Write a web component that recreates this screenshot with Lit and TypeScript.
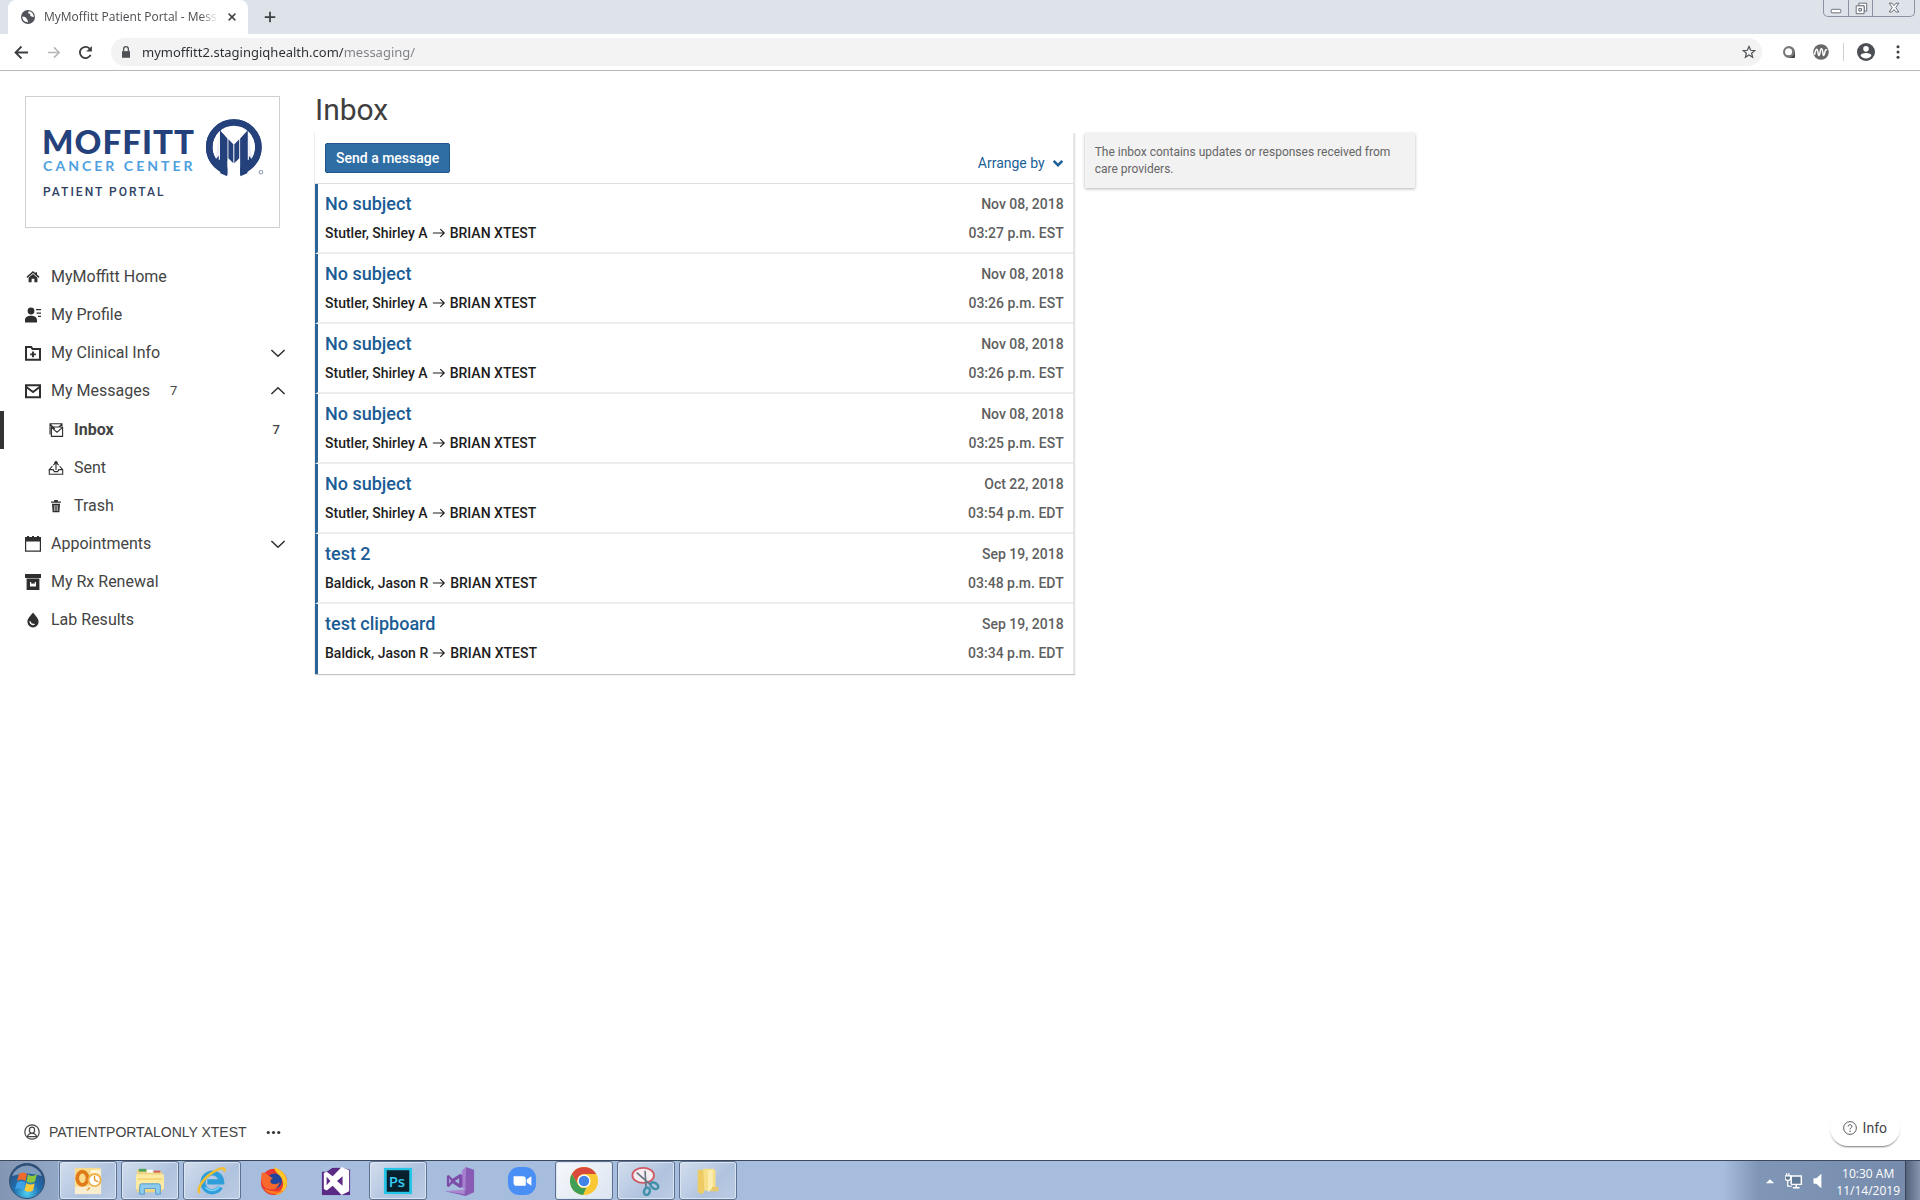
import { LitElement, html, svg, css, nothing } from "lit";
import { customElement, property, state } from "lit/decorators.js";
import { classMap } from "lit/directives/class-map.js";

interface Message {
  subject: string;
  from: string;
  date: string;
  time: string;
}

interface NavItem {
  id: string;
  label: string;
  icon: string;
  count?: number;
  children?: NavItem[];
}

const OWNER = "BRIAN XTEST";

const MESSAGES: Message[] = [
  { subject: "No subject", from: "Stutler, Shirley A", date: "Nov 08, 2018", time: "03:27 p.m. EST" },
  { subject: "No subject", from: "Stutler, Shirley A", date: "Nov 08, 2018", time: "03:26 p.m. EST" },
  { subject: "No subject", from: "Stutler, Shirley A", date: "Nov 08, 2018", time: "03:26 p.m. EST" },
  { subject: "No subject", from: "Stutler, Shirley A", date: "Nov 08, 2018", time: "03:25 p.m. EST" },
  { subject: "No subject", from: "Stutler, Shirley A", date: "Oct 22, 2018", time: "03:54 p.m. EDT" },
  { subject: "test 2", from: "Baldick, Jason R", date: "Sep 19, 2018", time: "03:48 p.m. EDT" },
  { subject: "test clipboard", from: "Baldick, Jason R", date: "Sep 19, 2018", time: "03:34 p.m. EDT" },
];

const NAV: NavItem[] = [
  { id: "home", label: "MyMoffitt Home", icon: "home" },
  { id: "profile", label: "My Profile", icon: "profile" },
  { id: "clinical", label: "My Clinical Info", icon: "clinical", children: [] },
  {
    id: "messages",
    label: "My Messages",
    icon: "mail",
    count: 7,
    children: [
      { id: "inbox", label: "Inbox", icon: "inbox", count: 7 },
      { id: "sent", label: "Sent", icon: "sent" },
      { id: "trash", label: "Trash", icon: "trash" },
    ],
  },
  { id: "appointments", label: "Appointments", icon: "calendar", children: [] },
  { id: "rx", label: "My Rx Renewal", icon: "rx" },
  { id: "lab", label: "Lab Results", icon: "drop" },
];

/* Line and solid glyphs, all on a 16 x 16 grid. */
const GLYPHS: Record<string, unknown> = {
  home: svg`<path d="M2 8.4 8 3l6 5.4M11.3 3.2v3" fill="none" stroke="currentColor" stroke-width="1.5"/><path d="M3.6 8.8 8 4.9l4.400 3.900v4.400H9.400V9.800H6.600v3.400h-3z" fill="currentColor"/>`,
  profile: svg`<circle cx="6" cy="4" r="3.400" fill="currentColor"/><path d="M0 15.500v-2.600C0 10 3 8.700 6 8.700s6 1.300 6 4.200v2.600zM11 2h5v1.300h-5zM11.600 5.400H16v1.300h-4.400zM13 8.800h3v1.300h-3z" fill="currentColor"/>`,
  clinical: svg`<path d="M1 2h5.200l1.300 2H15v10.800H1z" fill="none" stroke="currentColor" stroke-width="2"/><path d="M8 6.600v5.600M5.200 9.400h5.600" stroke="currentColor" stroke-width="1.900"/>`,
  mail: svg`<path d="M1 2.200h14v12H1zM1 3.800l7 5.200 7-5.200" fill="none" stroke="currentColor" stroke-width="2"/>`,
  inbox: svg`<path d="M3.400 14.400H14.600V5H3.400zM3.400 5.400 9 10.200l5.600-4.800M2 12.500V1.800h12V4M2 2l4.800 5M14 2l-3 3" fill="none" stroke="currentColor" stroke-width="1.100"/>`,
  sent: svg`<path d="M1.300 9.600v4.600h13.400V9.600L11.600 6M4.400 6 1.300 9.600h3.900l1.200 2h3.200l1.200-2h3.900M8 10V3M5.400 5.200 8 2.400l2.600 2.800" fill="none" stroke="currentColor" stroke-width="1.100"/><circle cx="8" cy="2.600" r="1.600" fill="currentColor"/>`,
  trash: svg`<path d="M3 3.400h3.200V2h3.600v1.400H13v1.400H3zM4 5.800h8l-.6 8.400H4.600z" fill="currentColor"/><path d="M6.400 7v6M8 7v6M9.600 7v6" stroke="#fff" stroke-width=".6"/>`,
  calendar: svg`<path d="M.6 4h14.800v11.200H.6z" fill="none" stroke="currentColor" stroke-width="1.200"/><path d="M0 1h2V0h2v1h3V0h2v1h3V0h2v1h2v4.400H0z" fill="currentColor"/>`,
  rx: svg`<path d="M0 0h16v4H0z" fill="currentColor"/><path d="M1.600 4.600h12.800V16H1.600zM5 8v4.400h6V8z" fill="currentColor" fill-rule="evenodd"/><path d="M6.200 8h3.600v1.600H6.200z" fill="currentColor"/>`,
  drop: svg`<path d="M8 .6c2.400 3.200 5.600 6 5.600 9.200a5.600 5.600 0 0 1-11.200 0C2.400 6.600 5.600 3.800 8 .6z" fill="currentColor"/><path d="M5 9.400A3 3 0 0 0 9.400 12.400 4 4 0 0 1 5 9.400z" fill="#fff" stroke="#fff"/>`,
  down: svg`<path d="m1.400 5 6.600 6.200L14.600 5" fill="none" stroke="currentColor" stroke-width="1.500"/>`,
  up: svg`<path d="M1.400 11 8 4.800l6.600 6.200" fill="none" stroke="currentColor" stroke-width="1.500"/>`,
  caret: svg`<path d="m3 5.500 5 5 5-5" fill="none" stroke="currentColor" stroke-width="2.800"/>`,
  arrow: svg`<path d="M1 8h13M9.500 3.500 14 8l-4.500 4.500" fill="none" stroke="currentColor" stroke-width="1.300"/>`,
  user: svg`<circle cx="8" cy="8" r="7.200" fill="none" stroke="currentColor" stroke-width="1.200"/><path d="M8 3.200c1.700 0 2.600 1.300 2.600 2.800 0 2-1 3.300-2.600 3.300S5.400 8 5.400 6c0-1.500.9-2.800 2.600-2.800zM3.400 13c.3-2.300 1.500-3 3.200-3.500M12.600 13c-.3-2.300-1.500-3-3.200-3.500M3.600 12.600h8.800" fill="none" stroke="currentColor" stroke-width="1.200"/>`,
  dots: svg`<circle cx="2.400" cy="8" r="1.700" fill="currentColor"/><circle cx="8" cy="8" r="1.700" fill="currentColor"/><circle cx="13.600" cy="8" r="1.700" fill="currentColor"/>`,
  help: svg`<circle cx="8" cy="8" r="7.300" fill="none" stroke="currentColor"/><path d="M5.900 6.300c0-1.300.9-2.100 2.100-2.100s2.200.8 2.200 1.900c0 1.600-2.100 1.700-2.100 3.500" fill="none" stroke="currentColor" stroke-width="1.100"/><circle cx="8.100" cy="11.600" r=".8" fill="currentColor"/>`,
  globe: svg`<circle cx="8" cy="8" r="7" fill="#50545a"/><path d="M2.300 7.500c2 .2 3.900.6 4.300 2.100.3 1.300 1.700 1.500 1.300 3.600-2.900.2-5.700-2.100-5.600-5.700zM9 2.200c-1.600.8-.6 2.400.5 2.500 1.300.1.200 2.200 1.700 2.600 1.100.3 1.700 1 2.700.5C13.600 5 11.600 2.500 9 2.200z" fill="#fff"/>`,
  close: svg`<path d="m3.500 3.500 9 9M12.500 3.500l-9 9" stroke="currentColor" stroke-width="1.900"/>`,
  plus: svg`<path d="M8 2v12M2 8h12" stroke="currentColor" stroke-width="2"/>`,
  back: svg`<path d="M15 8H2M8 1.600 1.600 8 8 14.400" fill="none" stroke="currentColor" stroke-width="1.900"/>`,
  forward: svg`<path d="M2 8h12M8.500 2.500 14 8l-5.500 5.500" fill="none" stroke="currentColor" stroke-width="1.700"/>`,
  reload: svg`<path d="M13.500 10.500A6 6 0 1 1 12.400 3.800" fill="none" stroke="currentColor" stroke-width="1.900"/><path d="M14.800 1v6H8.800z" fill="currentColor"/>`,
  lock: svg`<path d="M3.400 7h9.200v7.600H3.400z" fill="currentColor"/><path d="M5.300 7V4.500a2.700 2.700 0 0 1 5.400 0V7" fill="none" stroke="currentColor" stroke-width="1.500"/>`,
  star: svg`<path d="m8 1.800 1.900 4.200 4.600.4-3.500 3 1.100 4.500L8 11.500l-4.100 2.400L5 9.400l-3.500-3 4.600-.4z" fill="none" stroke="currentColor" stroke-width="1.400"/>`,
  lens: svg`<path d="M8 2a6 6 0 1 0 0 12h4.500a1.500 1.500 0 0 0 1.500-1.500V8a6 6 0 0 0-6-6z" fill="#777"/><path d="M8 14h4.500a1.500 1.500 0 0 0 1.500-1.500V7.500C13.500 11 11.500 13.200 8 14z" fill="#444"/><circle cx="7.600" cy="7.800" r="3.500" fill="#fff"/>`,
  wave: svg`<circle cx="8" cy="8" r="7.800" fill="#686868"/><path d="M1.600 10.800C2.800 4 4.200 4 5 8.600c.6 4 1.300 4 2-.2.800-5 2.200-5 2.800.2.500 4 1.300 3.800 2-.2.500-2.600 1.400-3.400 2.200-2.200" fill="none" stroke="#fff" stroke-width="1.500"/>`,
  account: svg`<circle cx="8" cy="8" r="8" fill="#4b4e52"/><circle cx="8" cy="5.200" r="2.500" fill="#fff"/><path d="M3.200 11.400c0-1.800 2.400-2.600 4.800-2.600s4.800.8 4.800 2.600C11.700 13 10 13.700 8 13.700s-3.700-.7-4.800-2.300z" fill="#fff"/>`,
  kebab: svg`<circle cx="8" cy="2.700" r="1.500" fill="currentColor"/><circle cx="8" cy="8" r="1.500" fill="currentColor"/><circle cx="8" cy="13.300" r="1.500" fill="currentColor"/>`,
  minimize: svg`<rect x="2.500" y="9.500" width="11" height="4" rx="1" fill="#fff" stroke="currentColor"/>`,
  restore: svg`<path d="M5.500 2.500h9v9h-3v-6h-6z" fill="#fff" stroke="currentColor"/><path d="M2.500 5.500h9v9h-9zM5.500 8.500v3h3v-3z" fill="#fff" stroke="currentColor"/>`,
  shut: svg`<path d="M2.500 2.500h3.200L8 5.300l2.300-2.800h3.200L10 7.500l3.500 5h-3.200L8 9.700l-2.300 2.800H2.500l3.500-5z" fill="#fff" stroke="currentColor"/>`,
  trayup: svg`<path d="M2.500 11 8 5.500l5.500 5.500z" fill="#fff"/>`,
  network: svg`<path d="M5.500 3.500h9v7.500h-9zM7 14h6M10 11v3" fill="#5f7896" stroke="#fff" stroke-width="1.300"/><path d="M0 3.500h5V6L3.500 7.500H1.500L0 6zM1.500 1v2.500M3.500 1v2.500M2.500 7.500v5H6" fill="#5f7896" stroke="#fff" stroke-width="1.200"/>`,
  speaker: svg`<path d="M4 5.500h2.500L11 1.500v13l-4.500-4H4z" fill="#fff"/>`,
};

@customElement("mm-icon")
class MmIcon extends LitElement {
  @property() name = "";

  static styles = css`
    :host {
      display: inline-flex;
      flex: none;
      width: 16px;
      height: 16px;
    }
    .glyph {
      width: 100%;
      height: 100%;
      display: block;
    }
  `;

  render() {
    return html`<svg class="glyph" viewBox="0 0 16 16" aria-hidden="true">${GLYPHS[this.name] ?? nothing}</svg>`;
  }
}

@customElement("browser-chrome")
class BrowserChrome extends LitElement {
  static styles = css`
    :host {
      display: block;
      font: 13px/20px "Open Sans", "Noto Sans", sans-serif;
      color: #3c4043;
    }
    button {
      display: inline-flex;
      align-items: center;
      justify-content: center;
      flex: none;
      border: 0;
      padding: 0;
      background: none;
      color: inherit;
      font: inherit;
    }
    .strip {
      display: flex;
      align-items: flex-start;
      height: 34px;
      padding-left: 8px;
      background: #dde3e9;
    }
    .tab {
      display: flex;
      align-items: center;
      gap: 8px;
      width: 240px;
      height: 34px;
      box-sizing: border-box;
      padding: 0 10px 0 12px;
      border-radius: 8px 8px 0 0;
      background: #fff;
    }
    .title {
      flex: 1;
      overflow: hidden;
      white-space: nowrap;
      font-size: 12px;
      color: #4a4d51;
      -webkit-mask-image: linear-gradient(90deg, #000 90%, transparent);
      mask-image: linear-gradient(90deg, #000 90%, transparent);
    }
    .tab button mm-icon {
      width: 12px;
      height: 12px;
    }
    .new {
      width: 44px;
      height: 34px;
    }
    .new mm-icon {
      width: 14px;
      height: 14px;
    }
    .window {
      display: flex;
      margin: 0 5px 0 auto;
      height: 16px;
      border: 1px solid #8b93a3;
      border-top: 0;
      border-radius: 0 0 5px 5px;
      color: #5a5f6c;
    }
    .window button {
      width: 24px;
    }
    .window button + button {
      border-left: 1px solid #8b93a3;
    }
    .window button:last-child {
      width: 42px;
    }
    .window mm-icon {
      width: 14px;
      height: 14px;
    }
    .bar {
      display: flex;
      align-items: center;
      height: 36px;
      padding: 0 12px 0 11px;
      border-bottom: 1px solid #b9b9b9;
      background: #fff;
    }
    .travel {
      display: flex;
      gap: 12px;
      margin-right: 16px;
    }
    .travel button {
      width: 20px;
      height: 28px;
    }
    .travel mm-icon {
      width: 15px;
      height: 15px;
    }
    .travel button:disabled {
      color: #b5b7b9;
    }
    .omnibox {
      display: flex;
      align-items: center;
      flex: 1;
      gap: 9px;
      height: 28px;
      padding: 0 6px 0 8px;
      border-radius: 14px;
      background: #f3f3f4;
    }
    .omnibox mm-icon {
      width: 14px;
      height: 14px;
      color: #4e5155;
    }
    .url {
      flex: 1;
      min-width: 0;
      border: 0;
      padding: 0;
      outline: 0;
      font: 13px/20px "Noto Sans", "Open Sans", sans-serif;
      color: #3c4043;
      background: linear-gradient(90deg, #2b2e31 202px, #7d8084 202px);
      -webkit-background-clip: text;
      background-clip: text;
      -webkit-text-fill-color: transparent;
    }
    .extensions {
      display: flex;
      align-items: center;
      gap: 12px;
      margin-left: 17px;
    }
    .extensions button {
      width: 20px;
      height: 28px;
    }
    .extensions .large {
      width: 18px;
      height: 18px;
    }
    .rule {
      width: 1px;
      height: 18px;
      background: #cfd1d4;
    }
  `;

  render() {
    return html`
      <div class="strip">
        <div class="tab">
          <mm-icon name="globe"></mm-icon>
          <span class="title">MyMoffitt Patient Portal - Messa</span>
          <button aria-label="Close tab"><mm-icon name="close"></mm-icon></button>
        </div>
        <button class="new" aria-label="New tab"><mm-icon name="plus"></mm-icon></button>
        <div class="window">
          <button aria-label="Minimize"><mm-icon name="minimize"></mm-icon></button>
          <button aria-label="Restore"><mm-icon name="restore"></mm-icon></button>
          <button aria-label="Close window"><mm-icon name="shut"></mm-icon></button>
        </div>
      </div>
      <div class="bar">
        <div class="travel">
          <button aria-label="Back"><mm-icon name="back"></mm-icon></button>
          <button aria-label="Forward" disabled><mm-icon name="forward"></mm-icon></button>
          <button aria-label="Reload"><mm-icon name="reload"></mm-icon></button>
        </div>
        <div class="omnibox">
          <mm-icon name="lock"></mm-icon>
          <input class="url" type="text" aria-label="Address" .value=${"mymoffitt2.stagingiqhealth.com/messaging/"} />
          <button aria-label="Bookmark this page"><mm-icon name="star"></mm-icon></button>
        </div>
        <div class="extensions">
          <button aria-label="Capture extension"><mm-icon name="lens"></mm-icon></button>
          <button aria-label="Wave extension"><mm-icon name="wave"></mm-icon></button>
          <span class="rule"></span>
          <button aria-label="Account"><mm-icon class="large" name="account"></mm-icon></button>
          <button aria-label="Browser menu"><mm-icon name="kebab"></mm-icon></button>
        </div>
      </div>
    `;
  }
}

@customElement("portal-sidebar")
class PortalSidebar extends LitElement {
  @state() private open = new Set<string>(["messages"]);
  @state() private current = "inbox";

  static styles = css`
    :host {
      display: flex;
      flex-direction: column;
      flex: none;
      width: 315px;
      box-sizing: border-box;
      padding-top: 25px;
      color: #444;
      font: 16px/20px Roboto, "Liberation Sans", sans-serif;
    }
    .logo {
      display: block;
      margin: 0 35px 30px 25px;
      border: 1px solid #cfcfcf;
      background: #fff;
    }
    .logo svg {
      display: block;
      width: 100%;
    }
    .word {
      font: 900 33px Lato, sans-serif;
      letter-spacing: 1px;
      fill: #25417b;
    }
    .sub {
      font: 700 14px Lato, sans-serif;
      letter-spacing: 3px;
      fill: #4f9fe0;
    }
    .portal {
      font: 500 12px Roboto, sans-serif;
      letter-spacing: 2px;
      fill: #2f4265;
    }
    .list {
      list-style: none;
      margin: 0;
      padding: 0;
    }
    .list .list {
      padding-top: 1px;
    }
    .row {
      display: flex;
      align-items: center;
      gap: 10px;
      width: 100%;
      height: 38px;
      box-sizing: border-box;
      padding: 0 29px 0 25px;
      border: 0;
      background: none;
      color: inherit;
      font: inherit;
      text-align: left;
      text-decoration: none;
    }
    .row mm-icon {
      color: #2f2f2f;
    }
    .count {
      margin-left: 10px;
      font-size: 13px;
    }
    .chevron {
      margin-left: auto;
    }
    .child {
      padding: 0 35px 0 44px;
      border-left: 4px solid transparent;
    }
    .child .count {
      margin-left: auto;
      font-weight: 500;
    }
    .current {
      border-left-color: #333;
    }
    .current .label {
      font-weight: 700;
    }
    .account {
      display: flex;
      align-items: center;
      gap: 9px;
      margin-top: auto;
      padding: 0 24px 18px;
      font: 14px/20px "Liberation Sans", sans-serif;
      color: #444;
    }
    .more {
      display: inline-flex;
      margin-left: 10px;
      border: 0;
      padding: 0;
      background: none;
      color: #333;
    }
    .more mm-icon {
      width: 15px;
      height: 15px;
    }
  `;

  private toggle(id: string) {
    const next = new Set(this.open);
    next.has(id) ? next.delete(id) : next.add(id);
    this.open = next;
  }

  private select(event: Event, id: string) {
    event.preventDefault();
    this.current = id;
  }

  private renderItem(item: NavItem, child = false): unknown {
    const expanded = this.open.has(item.id);
    const content = html`
      <mm-icon name=${item.icon}></mm-icon>
      <span class="label">${item.label}</span>
      ${item.count ? html`<span class="count">${item.count}</span>` : nothing}
    `;
    if (item.children) {
      return html`<li>
        <button class="row" aria-expanded=${expanded} @click=${() => this.toggle(item.id)}>
          ${content}<mm-icon class="chevron" name=${expanded ? "up" : "down"}></mm-icon>
        </button>
        ${expanded && item.children.length
          ? html`<ul class="list">${item.children.map((c) => this.renderItem(c, true))}</ul>`
          : nothing}
      </li>`;
    }
    return html`<li>
      <a
        class=${classMap({ row: true, child, current: child && item.id === this.current })}
        href="#${item.id}"
        @click=${(e: Event) => this.select(e, item.id)}
        >${content}</a
      >
    </li>`;
  }

  render() {
    return html`
      <a class="logo" href="#home">
        <svg viewBox="0 0 252 129">
          <text class="word" x="16" y="57">MOFFITT</text>
          <text class="sub" x="17" y="74">CANCER CENTER</text>
          <text class="portal" x="17" y="99">PATIENT PORTAL</text>
          <circle cx="207" cy="50" r="24.500" fill="none" stroke="#25417b" stroke-width="6.500" />
          <path d="M193 31 200.500 42v36L188 70zM221 31 213.500 42v36L226 70z" fill="#25417b" />
          <path d="M189 34h3.500v24L189 62zM225 34h-3.500v24l3.500 4z" fill="#fff" opacity=".9" />
          <path d="M192.600 31.500v31M221.400 31.500v31" stroke="#fff" stroke-width="1.200" />
          <path d="M194 34 207 47l13-13v-6h-26z" fill="#fff" />
          <path d="M193.500 34.500 200.500 41v38l-7-3zM220.500 34.500 213.500 41v38l7-3z" fill="#25417b" />
          <path d="m201.600 42 4.900 5v19l-4.900-5zM212.400 42 207.500 47v19l4.900-5z" fill="#25417b" />
          <path d="M200.800 63v20h12.400V63L207 69z" fill="#fff" />
          <path d="M181 27a34 34 0 0 1 52 0" fill="none" />
          <circle cx="207" cy="50" r="24.500" fill="none" stroke="#25417b" stroke-width="6.500" stroke-dasharray="133 21" stroke-dashoffset="-49" />
          <circle cx="234" cy="75" r="1.800" fill="none" stroke="#8f9bb3" />
        </svg>
      </a>
      <nav aria-label="Portal">
        <ul class="list">
          ${NAV.map((item) => this.renderItem(item))}
        </ul>
      </nav>
      <div class="account">
        <mm-icon name="user"></mm-icon>
        <span>PATIENTPORTALONLY XTEST</span>
        <button class="more" aria-label="Account options"><mm-icon name="dots"></mm-icon></button>
      </div>
    `;
  }
}

@customElement("message-list")
class MessageList extends LitElement {
  @property({ attribute: false }) messages: Message[] = [];

  static styles = css`
    :host {
      display: block;
      background: #fff;
      border-right: 2px solid #e6e6e6;
      box-shadow: -1px 0 0 #ececec, 0 1px 1px #c4c4c4;
      font: 14px/20px Roboto, "Liberation Sans", sans-serif;
    }
    .tools {
      display: flex;
      align-items: center;
      justify-content: space-between;
      height: 51px;
      box-sizing: border-box;
      padding: 0 8px 0 10px;
      border-bottom: 1px solid #dedede;
    }
    .send {
      height: 30px;
      border: 1px solid #20568a;
      border-radius: 2px;
      padding: 0 10px;
      background: #2f6ea5;
      color: #fff;
      font: 500 14px/20px Roboto, "Liberation Sans", sans-serif;
    }
    .arrange {
      display: flex;
      align-items: center;
      gap: 6px;
      padding-top: 9px;
      color: #1b5f98;
    }
    .arrange select {
      appearance: none;
      field-sizing: content;
      border: 0;
      padding: 0;
      background: none;
      color: inherit;
      font: 14px/20px Roboto, "Liberation Sans", sans-serif;
    }
    .arrange mm-icon {
      width: 14px;
      height: 14px;
    }
    .rows {
      list-style: none;
      margin: 0;
      padding: 0;
    }
    .message {
      display: flex;
      justify-content: space-between;
      height: 70px;
      box-sizing: border-box;
      padding: 10px 9px 0 7px;
      border-left: 3px solid #2b6597;
      border-bottom: 2px solid #ededed;
      color: #1d1d1d;
      text-decoration: none;
    }
    .rows li:last-child .message {
      border-bottom: 0;
    }
    .left,
    .right {
      display: flex;
      flex-direction: column;
      gap: 9px;
      font-weight: 500;
    }
    .right {
      align-items: flex-end;
      color: #5f5f5f;
    }
    .subject {
      font-size: 18px;
      color: #1a5c94;
    }
    .route {
      display: flex;
      align-items: center;
      gap: 4px;
    }
    .route mm-icon {
      width: 14px;
      height: 14px;
    }
  `;

  render() {
    return html`
      <div class="tools">
        <button class="send">Send a message</button>
        <label class="arrange">
          <select aria-label="Arrange by">
            <option selected>Arrange by</option>
          </select>
          <mm-icon name="caret"></mm-icon>
        </label>
      </div>
      <ul class="rows">
        ${this.messages.map(
          (m, i) => html`<li>
            <a class="message" href="#message-${i + 1}">
              <span class="left">
                <span class="subject">${m.subject}</span>
                <span class="route">${m.from}<mm-icon name="arrow"></mm-icon>${OWNER}</span>
              </span>
              <span class="right"><span>${m.date}</span><span>${m.time}</span></span>
            </a>
          </li>`
        )}
      </ul>
    `;
  }
}

/* Taskbar pictures, each on a 32 x 32 grid. */
const APPS: { name: string; open: boolean; active?: boolean; art: unknown }[] = [
  {
    name: "Outlook",
    open: true,
    art: svg`<path d="M2 3h28v27H2z" fill="#f8edcf"/><path d="M2 2h27v20H2z" fill="#fadb8c"/><path d="M19 4h10v18H17z" fill="#fff4d4"/><ellipse cx="10" cy="13" rx="5.500" ry="7" fill="none" stroke="#e07a18" stroke-width="4"/><circle cx="23" cy="15" r="6.500" fill="#fff" stroke="#f0b04a" stroke-width="2"/><path d="M23 10.500V15l4 2M18 23l-3 3" stroke="#e7962b" stroke-width="1.500" fill="none"/>`,
  },
  {
    name: "Explorer",
    open: true,
    art: svg`<path d="M2 4h11l2 2h14v22H2z" fill="#edd384"/><path d="M4 3h8v3H4z" fill="#4da35a"/><path d="M13 4h6v3h-6z" fill="#fff"/><path d="M20 5h7v2h-7z" fill="#d75b4a"/><path d="M1 9h30v16H1z" fill="#fbe9a4"/><path d="M3 13h26v2H3z" fill="#f2d878"/><path d="M5 30V21q0-2 2-2h18q2 0 2 2v9h-5v-6H10v6z" fill="#8ecbee" stroke="#4f9bcf"/>`,
  },
  {
    name: "Internet Explorer",
    open: true,
    art: svg`<path d="M25 22.500a10 10 0 1 1 1.300-5.500H11" fill="none" stroke="#2f9fdc" stroke-width="5.500"/><path d="M24 21.500a9 9 0 0 1-15 1" fill="none" stroke="#7fd4f7" stroke-width="1.500"/><path d="M3 29C-1 25 6 14 15 8S31 0 29 6" fill="none" stroke="#f4be2c" stroke-width="2.600"/>`,
  },
  {
    name: "Firefox",
    open: false,
    art: svg`<circle cx="16" cy="17" r="14" fill="#e8382f"/><path d="M16 1c8 3 14 8 14 17a14 14 0 0 1-13 13c8-4 11-11 7-18C21 9 17 6 16 1z" fill="#ffc629"/><path d="M5 24a14 14 0 0 0 22 1c-6 4-14 2-22-1z" fill="#ff7a22"/><circle cx="16.500" cy="16" r="8" fill="#20459c"/><path d="M3 7c3 0 5 1 7 3 2 1 3 2 5 3-3 1-4 4-1 6 3 1 6 0 8-2-1 7-8 10-14 7S2 13 3 7z" fill="#f8672b"/>`,
  },
  {
    name: "Visual Studio",
    open: false,
    art: svg`<path d="M1 2h30v29H1z" fill="#5b2a85"/><path d="M3 0h12l-9 6H0V1zM16 0h15v4z" fill="#a9bfdf"/><path d="M22 1 30 4.500V27l-8 4-9.500-10L6 26l-3-1.500v-17L6 6l6.500 5zM23 11l-6 5 6 5zM6 11.500v9l4-4.500z" fill="#fff" fill-rule="evenodd"/>`,
  },
  {
    name: "Photoshop",
    open: true,
    art: svg`<path d="M1 2h30v28H1z" fill="#25c5e8"/><path d="M4 4.500h24v23H4z" fill="#07202e"/><text x="6" y="22" font-family="Open Sans, sans-serif" font-size="16" font-weight="600" fill="#35cdf2">Ps</text>`,
  },
  {
    name: "Visual Studio Classic",
    open: false,
    art: svg`<path d="m22 1 9 3v24l-9 4L0 27l21-1z" fill="#8a5bb5"/><path d="M22 1v25l-4-4V5z" fill="#a77fd0"/><path d="m0 27 21-2v5z" fill="#a987cf"/><path d="M2 10.500 4 9.500l4 4 8-5 2.500 1v13l-2.500 1-8-5-4 4-2-1zM4.500 13v6l2-3zM15 13l-4.500 3 4.500 3z" fill="#7d4daa" fill-rule="evenodd"/>`,
  },
  {
    name: "Zoom",
    open: false,
    art: svg`<rect x="1" y="1" width="30" height="30" rx="12" fill="#4a8ff5"/><path d="M7 11h10q3 0 3 3v7H10q-3 0-3-3zM21 14.500l5-3.500v10l-5-3.500z" fill="#fff"/>`,
  },
  {
    name: "Chrome",
    open: true,
    active: true,
    art: svg`<circle cx="16" cy="16" r="15" fill="#f9c832"/><path d="M3 8.500A15 15 0 0 1 29 8.500H16A7.500 7.500 0 0 0 9.500 19.500z" fill="#d94a3a"/><path d="M3 8.500 9.500 19.700A7.500 7.500 0 0 0 18.500 23L15 31A15 15 0 0 1 3 8.500z" fill="#3f9f56"/><circle cx="16" cy="16" r="7" fill="#fff"/><circle cx="16" cy="16" r="5.600" fill="#4283e6"/>`,
  },
  {
    name: "Snipping Tool",
    open: true,
    art: svg`<ellipse cx="13" cy="10" rx="11.500" ry="8" fill="#f6eef0" stroke="#cf5a66" stroke-width="2"/><path d="m6 7 15 13M15 5l1 18" stroke="#6b7684" stroke-width="1.800"/><ellipse cx="25" cy="21" rx="4.500" ry="3" transform="rotate(35 25 21)" fill="none" stroke="#3f8fa8" stroke-width="2.600"/><ellipse cx="17" cy="27" rx="3" ry="4" transform="rotate(20 17 27)" fill="none" stroke="#3f8fa8" stroke-width="2.600"/>`,
  },
  {
    name: "Folder",
    open: true,
    art: svg`<path d="M5 4h7v24l-3 2-4-2z" fill="#eccb62"/><path d="M11 3h11l2 2v21H12z" fill="#f6df87"/><path d="m16 5 5-1v20l-5 4z" fill="#fbeeb0"/><path d="M21 22h6v5h-9z" fill="#e9c968"/>`,
  },
];

@customElement("task-bar")
class TaskBar extends LitElement {
  static styles = css`
    :host {
      display: flex;
      height: 40px;
      box-sizing: border-box;
      border-top: 1px solid #3d4a5e;
      background: #a6bddd;
      color: #fff;
      font: 12px/17px "Open Sans", "Noto Sans", sans-serif;
    }
    button {
      display: flex;
      align-items: center;
      justify-content: center;
      flex: none;
      box-sizing: border-box;
      border: 0;
      padding: 0;
      background: none;
      color: inherit;
      font: inherit;
    }
    .start {
      width: 58px;
      padding-right: 4px;
      background: linear-gradient(90deg, #8296b3, #93a8c7);
    }
    .start svg {
      width: 38px;
      height: 38px;
    }
    .apps {
      display: flex;
      gap: 4px;
      padding-left: 1px;
    }
    .app {
      width: 58px;
      height: 39px;
      border-radius: 3px;
    }
    .app svg {
      width: 30px;
      height: 30px;
    }
    .open {
      border: 1px solid #5d7290;
      background: linear-gradient(135deg, #d3deee, #b0c3de 60%, #bccce4);
      box-shadow: inset 0 0 0 1px #dbe5f2;
    }
    .active {
      background: linear-gradient(135deg, #f6f8fb, #dce5f1);
    }
    .tray {
      display: flex;
      align-items: center;
      margin-left: auto;
      padding-left: 35px;
      background: linear-gradient(90deg, #a6bddd, #7f96b6 35px, #768bab);
    }
    .tray .item {
      width: 24px;
      height: 39px;
    }
    .tray .item mm-icon {
      width: 18px;
      height: 18px;
    }
    .tray .item:first-child mm-icon {
      width: 12px;
      height: 12px;
    }
    .clock {
      display: flex;
      flex-direction: column;
      align-items: center;
      padding: 2px 5px 0 6px;
    }
    .desktop {
      align-self: stretch;
      width: 15px;
      border-left: 1px solid #39465a;
      background: linear-gradient(90deg, #55637b, #8695ad);
    }
  `;

  render() {
    return html`
      <button class="start" aria-label="Start">
        <svg viewBox="0 0 38 38" aria-hidden="true">
          <defs>
            <radialGradient id="orb" cx="50%" cy="85%" r="75%">
              <stop offset="0" stop-color="#4fd0f2" />
              <stop offset=".5" stop-color="#1f6eaf" />
              <stop offset="1" stop-color="#2b4e7c" />
            </radialGradient>
          </defs>
          <circle cx="19" cy="19" r="17.500" fill="url(#orb)" stroke="#34506f" />
          <path d="M4 14a16 16 0 0 1 30 0q-15-5-30 0z" fill="#b9cbe0" opacity=".6" />
          <path d="M11 12q4-3 8 0l-1.500 7q-4-3-8.500 0z" fill="#ef6a2b" />
          <path d="M20 12.500q4 3 9-.5l-2 7.500q-4 2.500-8.500 0z" fill="#8cc63f" />
          <path d="M9 20.500q4-3 8.200 0L15.500 28q-4-3-8.500-.5z" fill="#3fa0e8" />
          <path d="M18.300 21q4 3 8.400.3L25 28.500q-4 2.500-8.500 0z" fill="#fcc938" />
        </svg>
      </button>
      <div class="apps">
        ${APPS.map(
          (app) => html`<button class=${classMap({ app: true, open: app.open, active: !!app.active })} aria-label=${app.name}>
            <svg viewBox="0 0 32 32" aria-hidden="true">${app.art}</svg>
          </button>`
        )}
      </div>
      <div class="tray">
        <button class="item" aria-label="Hidden icons"><mm-icon name="trayup"></mm-icon></button>
        <button class="item" aria-label="Network"><mm-icon name="network"></mm-icon></button>
        <button class="item" aria-label="Volume"><mm-icon name="speaker"></mm-icon></button>
        <div class="clock"><span>10:30 AM</span><span>11/14/2019</span></div>
        <button class="desktop" aria-label="Show desktop"></button>
      </div>
    `;
  }
}

@customElement("app-root")
class AppRoot extends LitElement {
  static styles = css`
    :host {
      display: flex;
      flex-direction: column;
      min-height: 100vh;
      background: #fff;
      color: #3f3f3f;
      font: 14px/20px Roboto, "Liberation Sans", sans-serif;
    }
    .page {
      display: flex;
      flex: 1;
    }
    .main {
      flex: 1;
      min-width: 0;
      padding: 19px 20px 0 0;
    }
    .title {
      margin: 0 0 3px;
      font: 400 30px/40px Roboto, "Liberation Sans", sans-serif;
    }
    .columns {
      display: grid;
      grid-template-columns: 23fr 10fr;
      gap: 10px;
      align-items: start;
      max-width: 1100px;
    }
    .note {
      margin: 0;
      padding: 11px 20px 10px 10px;
      background: #f2f2f2;
      box-shadow: 0 1px 3px #b5b5b5;
      color: #666;
      font-size: 12px;
      line-height: 17px;
    }
    .help {
      display: flex;
      align-items: center;
      align-self: flex-end;
      gap: 6px;
      height: 36px;
      margin: 0 20px 14px 0;
      border: 0;
      border-radius: 18px;
      padding: 0 13px;
      background: #fff;
      box-shadow: 0 2px 2px -1px #777;
      color: #444;
      font: 14px/20px Roboto, "Liberation Sans", sans-serif;
    }
    .help mm-icon {
      width: 14px;
      height: 14px;
    }
  `;

  render() {
    return html`
      <browser-chrome></browser-chrome>
      <div class="page">
        <portal-sidebar></portal-sidebar>
        <main class="main">
          <h1 class="title">Inbox</h1>
          <div class="columns">
            <message-list .messages=${MESSAGES}></message-list>
            <p class="note">The inbox contains updates or responses received from care providers.</p>
          </div>
        </main>
        <button class="help"><mm-icon name="help"></mm-icon>Info</button>
      </div>
      <task-bar></task-bar>
    `;
  }
}
